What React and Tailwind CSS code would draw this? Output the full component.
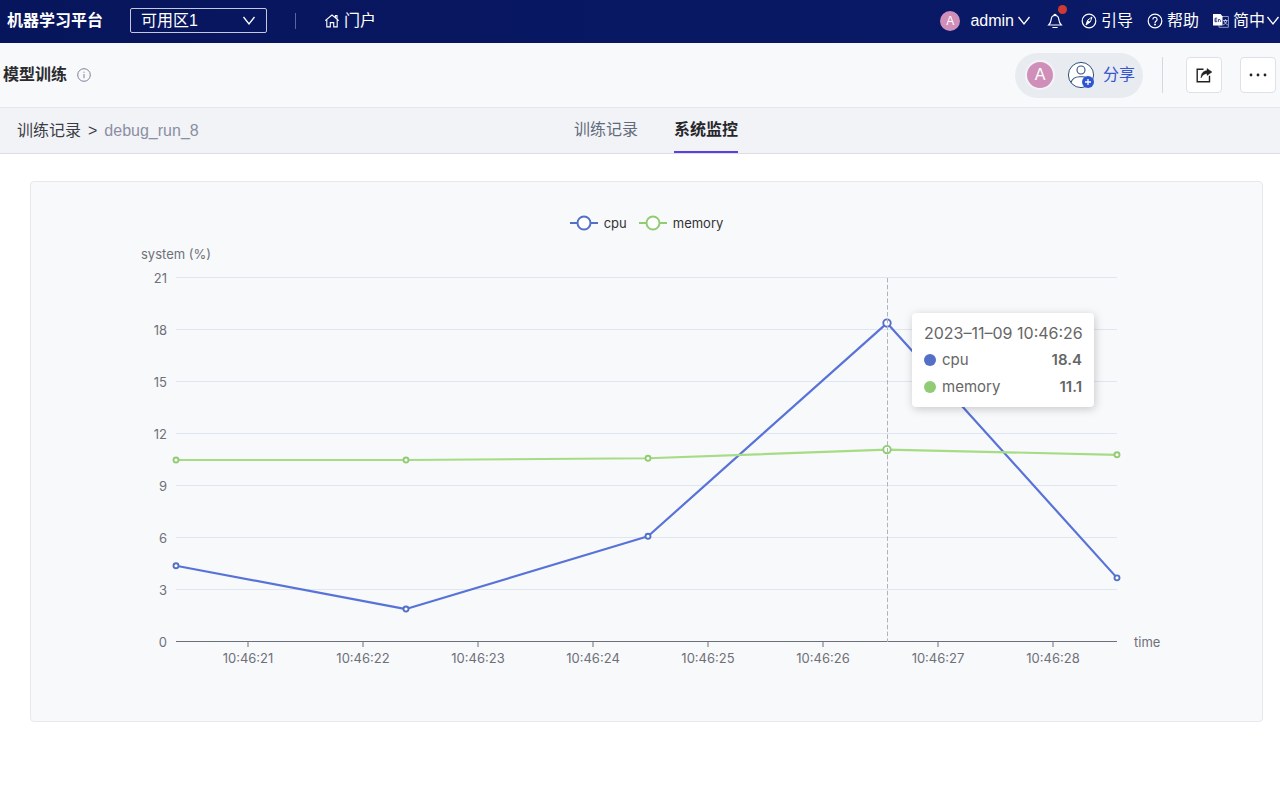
import { useState } from 'react'

const PLOT = { left: 176, right: 1117, top: 278, bottom: 642 }

// the chart's coordinate origin is the card's inner top-left corner
const OX = 31
const OY = 182

const yTicks = [0, 3, 6, 9, 12, 15, 18, 21]

const xTicks = [
  { x: 248, label: '10:46:21' },
  { x: 363, label: '10:46:22' },
  { x: 478, label: '10:46:23' },
  { x: 593, label: '10:46:24' },
  { x: 708, label: '10:46:25' },
  { x: 823, label: '10:46:26' },
  { x: 938, label: '10:46:27' },
  { x: 1053, label: '10:46:28' },
]

const pointXs = [176, 406, 648, 887, 1117]
const activeIndex = 3

const series = [
  { name: 'cpu', color: '#5470c6', line: '#5873d8', data: [4.4, 1.9, 6.1, 18.4, 3.7] },
  { name: 'memory', color: '#91cc75', line: '#a6dc84', data: [10.5, 10.5, 10.6, 11.1, 10.8] },
]

const toY = (v) => PLOT.bottom - (v / 21) * (PLOT.bottom - PLOT.top)

function ChevronDown({ className }) {
  return (
    <svg viewBox="0 0 14 14" className={className} fill="none" stroke="currentColor" strokeWidth="1.3">
      <path d="M1.5 3 7 10l5.5-7" />
    </svg>
  )
}

function HomeIcon() {
  return (
    <svg viewBox="0 0 16 16" className="w-4 h-4" fill="none" stroke="currentColor" strokeWidth="1.1">
      <path d="M1.2 7.6 8 2l6.8 5.6M11.4 4.6V2.6h1.6v3.4M2.8 6.6v7.3h3.5V9.6h3.4v4.3h3.5V6.6" />
    </svg>
  )
}

function BellIcon() {
  return (
    <svg viewBox="0 0 16 16" className="w-4 h-4" fill="none" stroke="currentColor" strokeWidth="1.2">
      <path d="M6.9 2.4a1.1 1.1 0 0 1 2.2 0M8 2.5C5.7 2.5 4.4 4 4.2 6.2 4 8.7 3.4 10.3 1.7 12h12.6c-1.7-1.7-2.3-3.3-2.5-5.8C11.6 4 10.3 2.5 8 2.5zM5.4 14.5h5.2" />
    </svg>
  )
}

function GuideIcon() {
  return (
    <svg viewBox="0 0 16 16" className="w-4 h-4" fill="none" stroke="currentColor" strokeWidth="1.2">
      <circle cx="8" cy="8" r="6.8" />
      <path d="M11 4 6.6 7.2 5 12l4.4-3.2z" strokeWidth="1" />
      <path d="M6.6 7.2l2.8 1.6L5 12z" fill="currentColor" stroke="none" />
    </svg>
  )
}

function HelpIcon() {
  return (
    <svg viewBox="0 0 16 16" className="w-4 h-4" fill="none" stroke="currentColor" strokeWidth="1.2">
      <circle cx="8" cy="8" r="6.8" />
      <path d="M5.9 6.4a2.1 2.1 0 1 1 3.3 1.7C8.3 8.7 8 9 8 9.9" />
      <circle cx="8" cy="11.6" r=".4" fill="currentColor" />
    </svg>
  )
}

function LanguageIcon() {
  return (
    <svg viewBox="0 0 16 16" className="w-4 h-4" fill="none">
      <path d="M9 3.5h6.4v10.8H6V12" stroke="#8f97c6" strokeWidth="1" />
      <path d="M0 1h7.5l2 2.2V12.5H0z" fill="#fff" />
      <path d="M4.2 5.2H2v3.5h2.2M2 7h2M5.4 8.9V6.3M5.4 7.2c.3-.9 2-1 2 .2v1.5" stroke="#0a1663" strokeWidth=".8" />
      <path d="M10.2 7.5h4.4M12.4 6.2v1.3M13.8 7.5c-.3 2-1.6 3.4-3.6 4.3M11 7.5c.4 2 1.8 3.4 3.7 4.3" stroke="#e5e7f5" strokeWidth=".8" />
    </svg>
  )
}

function AddUserIcon() {
  return (
    <svg viewBox="0 0 28 28" className="w-7 h-7" fill="none">
      <circle cx="14" cy="14" r="12.6" fill="#fff" stroke="#32507e" strokeWidth="1" />
      <circle cx="14" cy="9" r="4" stroke="#32507e" strokeWidth="1.1" />
      <path d="M3.8 21.5C5.5 17.5 9 15.8 12.5 15.8h3c1.3 0 2.5.2 3.6.7" stroke="#32507e" strokeWidth="1.1" />
      <circle cx="21" cy="21" r="6" fill="#2f54d4" />
      <path d="M18 21h6M21 18v6" stroke="#fff" strokeWidth="1.3" />
    </svg>
  )
}

function ExportIcon() {
  return (
    <svg viewBox="0 0 18 18" className="w-[18px] h-[18px]" fill="none" stroke="#222" strokeWidth="1.4">
      <path d="M8.5 3.2H2.2v12.6h12.3V9.8" />
      <path d="M6 12c.1-4.5 2.2-7 6-7.4V2.4l5 3.6-5 3.5V7.4C9.2 7.6 7.5 9 6 12z" fill="#222" strokeWidth=".4" />
    </svg>
  )
}

function TopBar() {
  return (
    <header className="h-[43px] bg-linear-to-r from-[#07155c] to-[#0a1a68] text-white flex items-center justify-between pl-[7px] pb-0.5 text-base">
      <div className="flex items-center">
        <span className="font-bold">机器学习平台</span>
        <div className="relative ml-[27px] w-[137px]">
          <select
            aria-label="可用区"
            className="appearance-none block w-full h-[25px] pl-2.5 pr-8 bg-transparent border border-[#c5c8dc] rounded-xs leading-5"
          >
            <option>可用区1</option>
          </select>
          <ChevronDown className="w-3.5 h-3.5 absolute right-[11px] top-1.5 pointer-events-none" />
        </div>
        <span className="w-px h-4 bg-[#5b659c] mx-7" />
        <a href="#portal" className="flex items-center gap-1">
          <HomeIcon />
          门户
        </a>
      </div>

      <div className="flex items-center">
        <button className="flex items-center">
          <span className="w-5 h-5 rounded-full bg-[#d08fb8] text-xs font-medium flex items-center justify-center mr-2.5">A</span>
          admin
          <ChevronDown className="w-3.5 h-3.5 ml-[3px]" />
        </button>
        <button aria-label="bell" className="relative ml-4">
          <BellIcon />
          <span className="absolute -top-2 -right-1 w-[9px] h-[9px] rounded-full bg-[#cf3a33]" />
        </button>
        <a href="#guide" className="flex items-center gap-1 ml-[18px]">
          <GuideIcon />
          引导
        </a>
        <a href="#help" className="flex items-center gap-1 ml-3.5">
          <HelpIcon />
          帮助
        </a>
        <button className="flex items-center gap-1 ml-3.5">
          <LanguageIcon />
          <span className="flex items-center">
            简中
            <ChevronDown className="w-3.5 h-3.5 ml-px" />
          </span>
        </button>
      </div>
    </header>
  )
}

function TitleBar() {
  return (
    <div className="h-16 bg-[#f8f9fb] flex items-center justify-between pl-[3px] pr-1">
      <div className="flex items-center gap-2.5">
        <h1 className="text-base font-bold text-[#2b2b2f]">模型训练</h1>
        <svg viewBox="0 0 14 14" className="w-3.5 h-3.5" fill="none" stroke="#7d8296">
          <circle cx="7" cy="7" r="6.3" />
          <path d="M7 6v4.2M7 3.7v1.1" />
        </svg>
      </div>
      <div className="flex items-center">
        <div className="flex items-center h-[45px] rounded-full bg-[#e8ebf0] pl-2.5 pr-2">
          <span className="w-[30px] h-[30px] rounded-full bg-[#d08fb8] border-2 border-[#f3f4f8] text-white flex items-center justify-center">A</span>
          <button className="flex items-center gap-2 ml-3 text-base text-[#3556cf]">
            <AddUserIcon />
            分享
          </button>
        </div>
        <span className="w-px h-9 bg-[#d5d8df] ml-[19px] mr-[23px]" />
        <button aria-label="export" className="w-9 h-9 rounded bg-white border border-[#dfe1e8] flex items-center justify-center mr-[18px]">
          <ExportIcon />
        </button>
        <button aria-label="more" className="w-9 h-9 rounded bg-white border border-[#dfe1e8] flex items-center justify-center">
          <svg viewBox="0 0 18 4" className="w-[18px] h-1" fill="#222">
            <circle cx="2" cy="2" r="1.4" />
            <circle cx="9" cy="2" r="1.4" />
            <circle cx="16" cy="2" r="1.4" />
          </svg>
        </button>
      </div>
    </div>
  )
}

function SubNav() {
  const [tab, setTab] = useState('系统监控')
  return (
    <div className="h-[47px] bg-[#f2f3f7] border-t border-b border-t-[#e4e6ea] border-b-[#dcdee3] grid grid-cols-[1fr_auto_1fr] text-base">
      <nav className="flex items-center gap-[7px] pl-[17px]">
        <a href="#records" className="text-[#3b3d44]">训练记录</a>
        <span className="text-[#3b3d44]">&gt;</span>
        <span className="text-[#8a8fa3]">debug_run_8</span>
      </nav>
      <div className="flex gap-9 pl-8">
        {['训练记录', '系统监控'].map((name) => (
          <button
            key={name}
            onClick={() => setTab(name)}
            className={
              tab === name
                ? 'h-[45px] border-b-2 border-[#5b3fe0] font-bold text-[#26272b]'
                : 'h-[45px] border-b-2 border-transparent text-[#626b7a]'
            }
          >
            {name}
          </button>
        ))}
      </div>
      <div />
    </div>
  )
}

function Legend() {
  return (
    <div className="absolute top-8 inset-x-0 flex justify-center gap-3 text-[13px] leading-[18px] text-[#333]">
      {series.map((s) => (
        <span key={s.name} className="flex items-center gap-1.5">
          <svg viewBox="0 0 28 16" className="w-7 h-4" fill="none" stroke={s.color} strokeWidth="2">
            <path d="M0 8h28" />
            <circle cx="14" cy="8" r="6.5" fill="#fff" />
          </svg>
          {s.name}
        </span>
      ))}
    </div>
  )
}

function Tooltip() {
  return (
    <div className="absolute left-[881px] top-[131px] w-[182px] rounded bg-white shadow-[1px_2px_10px_rgba(0,0,0,0.2)] px-3 py-2.5 text-[15px] leading-5 text-[#666]">
      <div className="whitespace-nowrap text-base leading-5">2023–11–09 10:46:26</div>
      {series.map((s) => (
        <div key={s.name} className="flex items-center mt-[7px]">
          <span className="w-3 h-3 rounded-full mr-1.5" style={{ backgroundColor: s.color }} />
          {s.name}
          <span className="ml-auto font-semibold">{s.data[activeIndex]}</span>
        </div>
      ))}
    </div>
  )
}

function Chart() {
  return (
    <div className="relative font-['Inter','Liberation_Sans',sans-serif]">
      <svg viewBox={`${OX} ${OY} 1231 539`} className="block w-full" fontSize="13" fill="#6e7079">
        <text x="176" y="259" textAnchor="middle">system (%)</text>
        {yTicks.map((v) => (
          <g key={v}>
            {v > 0 && (
              <path d={`M${PLOT.left} ${Math.round(toY(v)) - 0.5}H${PLOT.right}`} stroke="#e0e6f1" />
            )}
            <text x="167" y={Math.round(toY(v)) + 5} textAnchor="end">{v}</text>
          </g>
        ))}
        <path d={`M${PLOT.left} 641.5H${PLOT.right}`} stroke="#6e7079" strokeWidth="1.2" />
        {xTicks.map((t) => (
          <g key={t.label}>
            <path d={`M${t.x} 642v5`} stroke="#6e7079" />
            <text x={t.x} y="663" textAnchor="middle">{t.label}</text>
          </g>
        ))}
        <text x="1134" y="647">time</text>

        {series.map((s) => (
          <polyline
            key={s.name}
            points={s.data.map((v, i) => `${pointXs[i]},${toY(v)}`).join(' ')}
            fill="none"
            stroke={s.line}
            strokeWidth="2.2"
            strokeLinejoin="bevel"
          />
        ))}
        {series.map((s) =>
          s.data.map((v, i) => (
            <circle
              key={s.name + i}
              cx={pointXs[i]}
              cy={toY(v)}
              r={i === activeIndex ? 3.7 : 2.5}
              fill="#fff"
              stroke={s.color}
              strokeWidth="1.9"
            />
          ))
        )}
        <path d="M887.5 278V642" stroke="#b0b3bb" strokeDasharray="4.5 2.3" />
      </svg>
      <Legend />
      <Tooltip />
    </div>
  )
}

export default function App() {
  return (
    <div className="min-h-screen bg-white font-['Liberation_Sans','Noto_Sans_CJK_SC',sans-serif]">
      <TopBar />
      <TitleBar />
      <SubNav />
      <main className="pt-[27px] pl-[30px] pr-[17px]">
        <section className="rounded bg-[#f8f9fb] border border-[#e6e8ed]">
          <Chart />
        </section>
      </main>
    </div>
  )
}
